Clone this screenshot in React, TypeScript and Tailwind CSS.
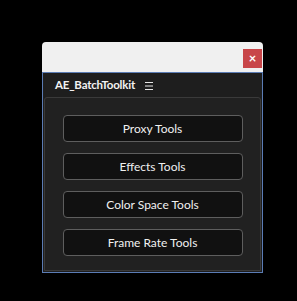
import React from "react";

const tools = ["Proxy Tools", "Effects Tools", "Color Space Tools", "Frame Rate Tools"];

export default function App() {
  return (
    <div
      className="w-[297px] h-[301px] bg-black pl-[42px] pt-[42px]"
      style={{ fontFamily: 'Lato, "Open Sans", sans-serif' }}
    >
      <div className="w-[221px]">
        {/* Title bar */}
        <div className="h-[30px] bg-[#f0f0f0] rounded-t-[4px] flex justify-end items-start pt-[7px] pr-[1px]">
          <button className="w-[19px] h-[19px] bg-[#c84649] text-white text-[13px] font-bold leading-none flex items-center justify-center pb-[1px]">
            ×
          </button>
        </div>

        {/* Panel body */}
        <div className="h-[201px] border border-[#5b7cb4] bg-[#1e1e1e] flex flex-col">
          <div className="h-[24px] flex items-center pl-[12px] gap-[10px] text-[#f2f2f2]">
            <span className="text-[11.5px] font-bold tracking-[-0.2px]">AE_BatchToolkit</span>
            <svg width="8" height="8" viewBox="0 0 8 8" className="mt-[1px]">
              <path d="M0 0.5H8M0 4H8M0 7.5H8" stroke="#e6e6e6" strokeWidth="1" />
            </svg>
          </div>
          <div className="flex-1 mx-[1px] mb-[1px] border border-[#3a3a3a] rounded-t-[3px] bg-[#212121] flex flex-col items-center pt-[17px] gap-[11px]">
            {tools.map((t) => (
              <button
                key={t}
                className="w-[180px] h-[27px] bg-[#111111] border border-[#5e5e5e] rounded-[4px] text-[12px] text-[#f0f0f0] flex items-center justify-center"
              >
                {t}
              </button>
            ))}
          </div>
        </div>
      </div>
    </div>
  );
}
